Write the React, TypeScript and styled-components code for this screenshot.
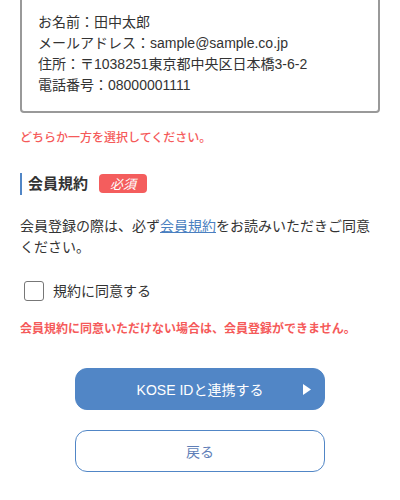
import React from "react";
import styled, { createGlobalStyle } from "styled-components";

const Global = createGlobalStyle`
  html, body { margin: 0; padding: 0; background: #fff; }
  body {
    font-family: "Liberation Sans", "Noto Sans CJK JP", sans-serif;
    color: #333;
    overflow: hidden;
  }
`;

const Page = styled.div`
  padding: 0 20px;
  margin-top: -6px;
  display: flex;
  flex-direction: column;
`;

const InfoBox = styled.div`
  border: 2px solid #999;
  border-radius: 4px;
  padding: 16px 16px 15px;
  font-size: 14px;
  line-height: 21px;
  color: #333;
`;

const InfoLine = styled.div``;

const ErrorText = styled.p<{ $bold?: boolean; $top: number }>`
  margin: ${(p) => p.$top}px 0 0;
  font-size: 12px;
  line-height: 18px;
  color: #f55a5a;
  font-weight: ${(p) => (p.$bold ? 700 : 500)};
`;

const Heading = styled.div`
  margin-top: 26px;
  display: flex;
  align-items: center;
  gap: 11px;
  height: 22px;
  border-left: 2px solid #5186c6;
  padding-left: 6px;
`;

const HeadingText = styled.h2`
  margin: 0;
  font-size: 15px;
  font-weight: 700;
  color: #333;
  line-height: 22px;
`;

const Badge = styled.span`
  display: inline-flex;
  align-items: center;
  justify-content: center;
  width: 48px;
  height: 19px;
  margin-top: -1px;
  border-radius: 4px;
  background: #f45d5d;
  color: #fff;
  font-size: 13px;
  font-weight: 400;
  font-style: italic;
`;

const Paragraph = styled.p`
  margin: 21px 0 0;
  font-size: 14px;
  line-height: 21px;
  color: #333;
`;

const Link = styled.a`
  color: #4a7fc0;
  text-decoration: underline;
`;

const CheckRow = styled.label`
  margin-top: 23px;
  display: flex;
  align-items: center;
  gap: 9px;
  padding-left: 4px;
  font-size: 14px;
  line-height: 20px;
  color: #333;
`;

const CheckBox = styled.span`
  width: 20px;
  height: 20px;
  box-sizing: border-box;
  border: 1px solid #777;
  border-radius: 3px;
  background: #fff;
`;

const Buttons = styled.div`
  margin-top: 30px;
  display: flex;
  flex-direction: column;
  align-items: center;
  gap: 20px;
`;

const Button = styled.button<{ $primary?: boolean }>`
  position: relative;
  width: 250px;
  height: 42px;
  box-sizing: border-box;
  border-radius: 12px;
  border: 1px solid #5186c6;
  background: ${(p) => (p.$primary ? "#5186c6" : "#fff")};
  color: ${(p) => (p.$primary ? "#fff" : "#5f7fb8")};
  font-family: "Liberation Sans", "Noto Sans CJK JP", sans-serif;
  font-size: 14px;
  padding: 0;
  cursor: pointer;
`;

const Arrow = styled.svg`
  position: absolute;
  right: 13px;
  top: 15px;
`;

export default function App() {
  return (
    <>
      <Global />
      <Page>
        <InfoBox>
          <InfoLine>お名前：田中太郎</InfoLine>
          <InfoLine>メールアドレス：sample@sample.co.jp</InfoLine>
          <InfoLine>住所：〒1038251東京都中央区日本橋3-6-2</InfoLine>
          <InfoLine>電話番号：08000001111</InfoLine>
        </InfoBox>
        <ErrorText $top={16}>どちらか一方を選択してください。</ErrorText>
        <Heading>
          <HeadingText>会員規約</HeadingText>
          <Badge>必須</Badge>
        </Heading>
        <Paragraph>
          会員登録の際は、必ず<Link href="#">会員規約</Link>をお読みいただきご同意ください。
        </Paragraph>
        <CheckRow>
          <CheckBox />
          規約に同意する
        </CheckRow>
        <ErrorText $bold $top={19}>
          会員規約に同意いただけない場合は、会員登録ができません。
        </ErrorText>
        <Buttons>
          <Button $primary>
            KOSE IDと連携する
            <Arrow width="8" height="11" viewBox="0 0 8 11">
              <polygon points="0,0 8,5.5 0,11" fill="#fff" />
            </Arrow>
          </Button>
          <Button>戻る</Button>
        </Buttons>
      </Page>
    </>
  );
}
